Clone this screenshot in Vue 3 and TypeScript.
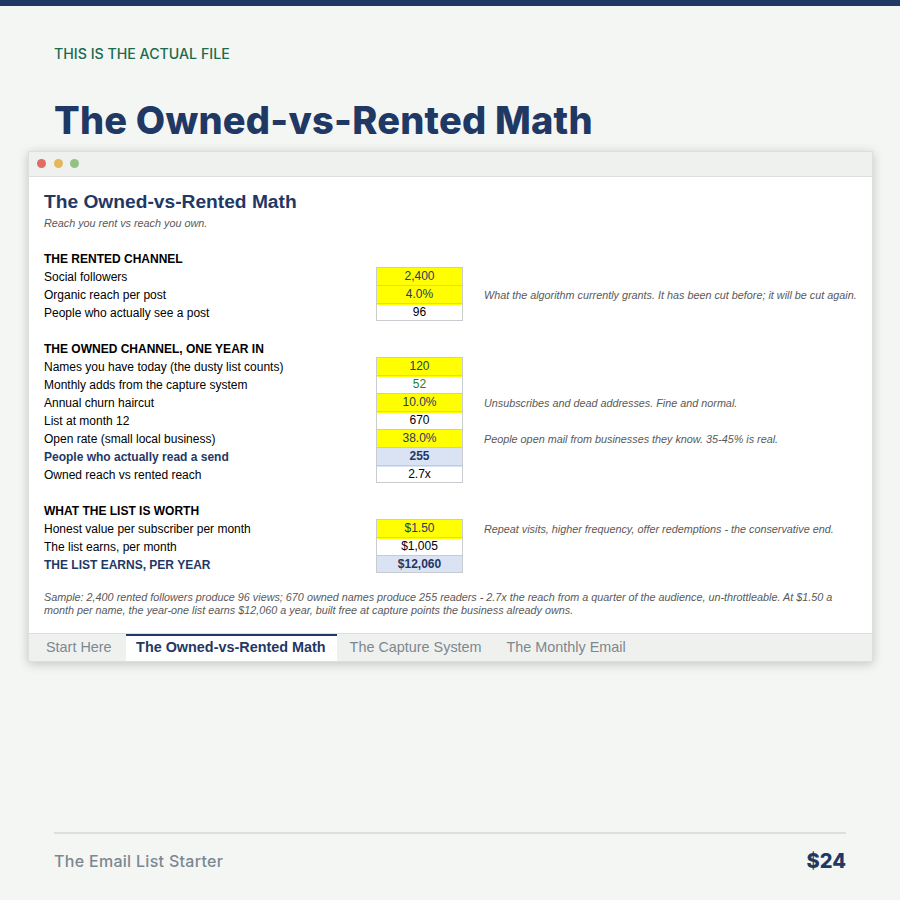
<script setup lang="ts">
interface Row {
  label: string
  value?: string
  note?: string
  kind?: 'head' | 'total' | 'blank'
  cell?: 'input' | 'calc' | 'green' | 'sum'
}

const rows: Row[] = [
  { label: 'THE RENTED CHANNEL', kind: 'head' },
  { label: 'Social followers', value: '2,400', cell: 'input' },
  {
    label: 'Organic reach per post',
    value: '4.0%',
    cell: 'input',
    note: 'What the algorithm currently grants. It has been cut before; it will be cut again.',
  },
  { label: 'People who actually see a post', value: '96', cell: 'calc' },
  { label: '', kind: 'blank' },
  { label: 'THE OWNED CHANNEL, ONE YEAR IN', kind: 'head' },
  { label: 'Names you have today (the dusty list counts)', value: '120', cell: 'input' },
  { label: 'Monthly adds from the capture system', value: '52', cell: 'green' },
  {
    label: 'Annual churn haircut',
    value: '10.0%',
    cell: 'input',
    note: 'Unsubscribes and dead addresses. Fine and normal.',
  },
  { label: 'List at month 12', value: '670', cell: 'calc' },
  {
    label: 'Open rate (small local business)',
    value: '38.0%',
    cell: 'input',
    note: 'People open mail from businesses they know. 35-45% is real.',
  },
  { label: 'People who actually read a send', value: '255', cell: 'sum', kind: 'total' },
  { label: 'Owned reach vs rented reach', value: '2.7x', cell: 'calc' },
  { label: '', kind: 'blank' },
  { label: 'WHAT THE LIST IS WORTH', kind: 'head' },
  {
    label: 'Honest value per subscriber per month',
    value: '$1.50',
    cell: 'input',
    note: 'Repeat visits, higher frequency, offer redemptions - the conservative end.',
  },
  { label: 'The list earns, per month', value: '$1,005', cell: 'calc' },
  { label: 'THE LIST EARNS, PER YEAR', value: '$12,060', cell: 'sum', kind: 'total' },
]

const tabs = ['Start Here', 'The Owned-vs-Rented Math', 'The Capture System', 'The Monthly Email']
const activeTab = 'The Owned-vs-Rented Math'
</script>

<template>
  <div class="page">
    <div class="top-bar"></div>
    <header class="intro">
      <div class="eyebrow">THIS IS THE ACTUAL FILE</div>
      <h1 class="headline">The Owned-vs-Rented Math</h1>
    </header>

    <section class="window">
      <div class="titlebar">
        <span class="dot red"></span>
        <span class="dot yellow"></span>
        <span class="dot green"></span>
      </div>
      <div class="sheet">
        <h2 class="sheet-title">The Owned-vs-Rented Math</h2>
        <p class="sheet-sub">Reach you rent vs reach you own.</p>
        <div class="grid">
          <div v-for="(row, i) in rows" :key="i" class="row" :class="row.kind">
            <div class="label">{{ row.label }}</div>
            <div class="value" :class="row.cell">{{ row.value }}</div>
            <div class="note">{{ row.note }}</div>
          </div>
        </div>
        <p class="sample">
          Sample: 2,400 rented followers produce 96 views; 670 owned names produce 255 readers - 2.7x the reach from a quarter of the audience, un-throttleable. At $1.50 a month per name, the year-one list earns $12,060 a year, built free at capture points the business already owns.
        </p>
      </div>
      <nav class="tabs">
        <div v-for="tab in tabs" :key="tab" class="tab" :class="{ active: tab === activeTab }">{{ tab }}</div>
      </nav>
    </section>

    <footer class="footer">
      <span class="product">The Email List Starter</span>
      <span class="price">$24</span>
    </footer>
  </div>
</template>

<style>
body {
  background: #f4f6f4;
}
</style>

<style scoped>
.page {
  height: 900px;
  display: flex;
  flex-direction: column;
  background: #f4f6f4;
  overflow: hidden;
}

.top-bar {
  height: 6px;
  background: #1f3864;
}

.intro {
  padding: 39px 54px 0;
}

.eyebrow {
  font-family: "Inter", sans-serif;
  font-size: 14.2px;
  line-height: 18px;
  font-weight: 500;
  color: #1a6b4f;
}

.headline {
  margin: 27px 0 0;
  font-family: "Inter", sans-serif;
  font-size: 38px;
  line-height: 60px;
  height: 59px;
  font-weight: 800;
  letter-spacing: 0.22px;
  color: #1f3864;
  white-space: nowrap;
}

.window {
  margin: 2px 27px 0 28px;
  height: 511px;
  display: flex;
  flex-direction: column;
  background: #fff;
  border: 1px solid #dcdfdc;
  box-sizing: border-box;
  box-shadow: 0 2px 10px rgba(0, 0, 0, 0.2);
  font-family: "Liberation Sans", Arial, sans-serif;
}

.titlebar {
  height: 25px;
  flex: none;
  display: flex;
  align-items: center;
  gap: 7.5px;
  padding: 0 0 2px 8px;
  box-sizing: border-box;
  background: #eff1ef;
  border-bottom: 1px solid #dcdfdc;
}

.dot {
  width: 9px;
  height: 9px;
  border-radius: 50%;
}
.dot.red { background: #e06c66; }
.dot.yellow { background: #e5b75c; }
.dot.green { background: #95c184; }

.sheet {
  flex: 1;
  padding: 13px 15px 0;
}

.sheet-title {
  margin: 0;
  font-size: 19.2px;
  line-height: 24px;
  font-weight: 700;
  color: #1f3864;
}

.sheet-sub {
  margin: 1px 0 0;
  font-size: 10.8px;
  line-height: 16px;
  font-style: italic;
  color: #595959;
}

.grid {
  margin-top: 18px;
}

.row {
  display: grid;
  grid-template-columns: 332px 87px 1fr;
  height: 18px;
  font-size: 12px;
  line-height: 20px;
  color: #000;
}

.label {
  white-space: nowrap;
}

.row.head .label {
  font-weight: 700;
}

.row.total .label {
  font-weight: 700;
  color: #1f3864;
}

.value {
  text-align: center;
  box-sizing: border-box;
}

.value.input,
.value.calc,
.value.green,
.value.sum {
  border: 1px solid #c8ccd0;
  border-bottom-width: 0;
  line-height: 17px;
}

.row:has(+ .blank) .value,
.row:last-child .value {
  border-bottom-width: 1px;
  height: 18px;
}

.value.input {
  background: #ffff00;
  color: #1f3864;
}

.value.green {
  color: #1e7b34;
}

.value.sum {
  background: #dae3f3;
  color: #1f3864;
  font-weight: 700;
}

.note {
  padding-left: 21px;
  font-size: 10.8px;
  font-style: italic;
  color: #595959;
  white-space: nowrap;
}

.sample {
  margin: 18px 0 0;
  font-size: 10.8px;
  line-height: 12.5px;
  font-style: italic;
  color: #595959;
}

.tabs {
  flex: none;
  height: 27px;
  display: flex;
  gap: 1px;
  padding-left: 5px;
  background: #eff1ef;
  border-top: 1px solid #dcdfdc;
}

.tab {
  padding: 0 12px;
  font-size: 14.4px;
  line-height: 27px;
  color: #7d8790;
}

.tab.active {
  padding: 0 11px 2px 10.5px;
  margin-left: 1px;
  background: #fff;
  border-top: 2px solid #1f3864;
  line-height: 23px;
  font-weight: 700;
  color: #1f3864;
}

.footer {
  margin: 170px 54px 0;
  height: 56px;
  display: flex;
  justify-content: space-between;
  align-items: center;
  border-top: 2px solid #dcdfdc;
  box-sizing: border-box;
  font-family: "Inter", sans-serif;
}

.product {
  font-size: 16px;
  letter-spacing: 0.3px;
  font-weight: 500;
  color: #7d8790;
}

.price {
  font-size: 20px;
  font-weight: 800;
  color: #1f3864;
}
</style>
